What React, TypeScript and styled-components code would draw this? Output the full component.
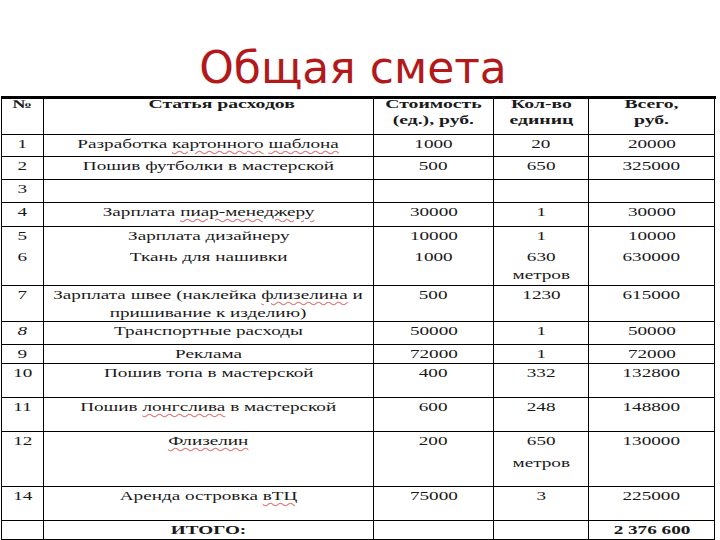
import React from "react";
import styled, { createGlobalStyle } from "styled-components";

const GlobalStyle = createGlobalStyle`
  html, body {
    margin: 0;
    padding: 0;
    background: #fff;
    overflow: hidden;
    scrollbar-width: none;
  }
  #root {
    width: 720px;
    height: 540px;
    overflow: clip;
  }
`;

const Page = styled.div`
  width: 720px;
  height: 540px;
  display: flex;
  flex-direction: column;
  overflow: clip;
`;

const Title = styled.h1`
  margin: 0;
  height: 96px;
  flex: none;
  box-sizing: border-box;
  padding-top: 43px;
  padding-right: 14px;
  text-align: center;
  font-family: "DejaVu Sans", Verdana, sans-serif;
  font-weight: 400;
  font-size: 44px;
  line-height: 50px;
  color: #b3191b;
`;

const Sheet = styled.div`
  margin-left: 1px;
  width: 714px;
  display: grid;
  grid-template-columns: 42px 330px 120px 95px 126px;
  border-top: 3px solid #000;
  border-left: 1px solid #000;
  font-family: "Liberation Serif", "Times New Roman", serif;
  color: #1a1a1a;
`;

const Cell = styled.div<{ $h: number; $open?: boolean; $bold?: boolean; $shift?: number }>`
  box-sizing: border-box;
  height: ${(p) => p.$h}px;
  border-right: 1px solid #000;
  border-bottom: ${(p) => (p.$open ? "none" : "1px solid #000")};
  padding-left: ${(p) => p.$shift ?? 0}px;
  text-align: center;
  font-size: 13.5px;
  line-height: 18px;
  font-weight: ${(p) => (p.$bold ? 700 : 400)};
  white-space: nowrap;
`;

const HeadCell = styled(Cell)`
  font-size: 12px;
  line-height: 16px;
`;

const Wide = styled.span`
  display: inline-block;
  transform: scaleX(1.42);
  transform-origin: center top;
`;

const HeadWide = styled(Wide)`
  transform: translateY(-3px) scaleX(1.64);
`;

const Spell = styled.span`
  text-decoration: underline wavy rgba(205, 60, 60, 0.7);
  text-decoration-thickness: 1px;
  text-underline-offset: 2px;
`;

const Gap = styled.span`
  display: block;
  height: 4px;
`;

type Row = {
  n: React.ReactNode;
  name: React.ReactNode;
  cost: React.ReactNode;
  qty: React.ReactNode;
  total: React.ReactNode;
  h: number;
  open?: boolean;
  bold?: boolean;
};

const rows: Row[] = [
  {
    n: "1",
    name: (
      <>
        Разработка <Spell>картонного</Spell> <Spell>шаблона</Spell>
      </>
    ),
    cost: "1000",
    qty: "20",
    total: "20000",
    h: 22,
  },
  { n: "2", name: "Пошив футболки в мастерской", cost: "500", qty: "650", total: "325000", h: 23 },
  { n: "3", name: "", cost: "", qty: "", total: "", h: 23 },
  {
    n: "4",
    name: (
      <>
        Зарплата <Spell>пиар-менеджеру</Spell>
      </>
    ),
    cost: "30000",
    qty: "1",
    total: "30000",
    h: 24,
  },
  { n: "5", name: "Зарплата дизайнеру", cost: "10000", qty: "1", total: "10000", h: 21, open: true },
  {
    n: "6",
    name: "Ткань для нашивки",
    cost: "1000",
    qty: (
      <>
        630
        <br />
        метров
      </>
    ),
    total: "630000",
    h: 38,
  },
  {
    n: "7",
    name: (
      <>
        Зарплата швее (наклейка <Spell>флизелина</Spell> и
        <br />
        пришивание к изделию)
      </>
    ),
    cost: "500",
    qty: "1230",
    total: "615000",
    h: 36,
  },
  { n: <i>8</i>, name: "Транспортные расходы", cost: "50000", qty: "1", total: "50000", h: 23 },
  { n: "9", name: "Реклама", cost: "72000", qty: "1", total: "72000", h: 19 },
  { n: "10", name: "Пошив топа в мастерской", cost: "400", qty: "332", total: "132800", h: 34 },
  {
    n: "11",
    name: (
      <>
        Пошив <Spell>лонгслива</Spell> в мастерской
      </>
    ),
    cost: "600",
    qty: "248",
    total: "148800",
    h: 34,
  },
  {
    n: "12",
    name: <Spell>Флизелин</Spell>,
    cost: "200",
    qty: (
      <>
        650
        <Gap />
        метров
      </>
    ),
    total: "130000",
    h: 55,
  },
  {
    n: "14",
    name: (
      <>
        Аренда островка <Spell>вТЦ</Spell>
      </>
    ),
    cost: "75000",
    qty: "3",
    total: "225000",
    h: 34,
  },
  { n: "", name: "ИТОГО:", cost: "", qty: "", total: "2 376 600", h: 19, bold: true },
];

const headers: { text: React.ReactNode; shift?: number }[] = [
  { text: "№" },
  { text: "Статья расходов", shift: 26 },
  {
    text: (
      <>
        Стоимость
        <br />
        (ед.), руб.
      </>
    ),
  },
  {
    text: (
      <>
        Кол-во
        <br />
        единиц
      </>
    ),
  },
  {
    text: (
      <>
        Всего,
        <br />
        руб.
      </>
    ),
  },
];

export default function App() {
  return (
    <>
      <GlobalStyle />
      <Page>
        <Title>Общая смета</Title>
        <Sheet>
          {headers.map((h, j) => (
            <HeadCell key={`h-${j}`} $h={36} $bold $shift={h.shift}>
              <HeadWide>{h.text}</HeadWide>
            </HeadCell>
          ))}
          {rows.map((r, i) =>
            [r.n, r.name, r.cost, r.qty, r.total].map((v, j) => (
              <Cell key={`${i}-${j}`} $h={r.h} $open={r.open} $bold={r.bold}>
                <Wide>{v}</Wide>
              </Cell>
            ))
          )}
        </Sheet>
      </Page>
    </>
  );
}
